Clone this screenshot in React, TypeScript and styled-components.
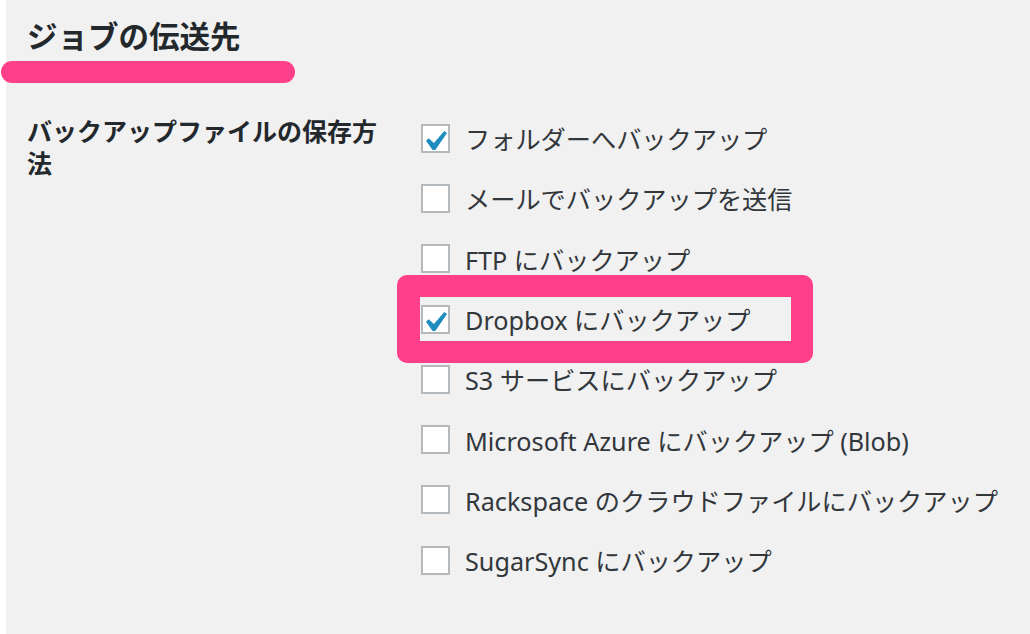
import React from "react";
import styled, { createGlobalStyle } from "styled-components";

const Global = createGlobalStyle`
  html, body { margin: 0; padding: 0; background: #ffffff; }
  body { font-family: "Liberation Sans", "Noto Sans CJK JP", sans-serif; }
`;

const Page = styled.div`
  position: relative;
  width: 1030px;
  height: 634px;
  overflow: hidden;
  background: #ffffff;
  padding-left: 6px;
  box-sizing: border-box;
`;

const Panel = styled.div`
  height: 100%;
  background: #f1f1f1;
  padding: 17px 0 0 21px;
  box-sizing: border-box;
`;

const Title = styled.h2`
  margin: 0;
  font-family: "Liberation Sans", "Noto Sans CJK JP", sans-serif;
  font-size: 30.5px;
  font-weight: 700;
  line-height: 40px;
  color: #23282d;
`;

const FormRow = styled.div`
  display: flex;
  margin-top: 51px;
`;

const FieldLabel = styled.div`
  width: 372px;
  flex-shrink: 0;
  padding-top: 8px;
  padding-right: 22px;
  font-size: 25px;
  font-weight: 700;
  line-height: 32px;
  color: #23282d;
`;

const Options = styled.div`
  display: flex;
  flex-direction: column;
`;

const Option = styled.label`
  display: flex;
  align-items: center;
  height: 60.3px;
  gap: 15px;
  font-family: "Noto Sans", "Noto Sans CJK JP", sans-serif;
  font-size: 25.2px;
  color: #32373c;
  white-space: nowrap;
`;

const Box = styled.span`
  width: 29px;
  height: 29px;
  box-sizing: border-box;
  border: 2px solid #b4b9be;
  background: #ffffff;
  display: flex;
  align-items: flex-start;
  justify-content: flex-start;
  padding: 5px 0 0 3px;
  overflow: visible;
  flex-shrink: 0;
`;

const Underline = styled.div`
  position: absolute;
  left: 1px;
  top: 61px;
  width: 294px;
  height: 22px;
  border-radius: 11px;
  background: #ff3f89;
`;

const Highlight = styled.div`
  position: absolute;
  left: 397px;
  top: 275px;
  width: 416px;
  height: 88px;
  box-sizing: border-box;
  border-style: solid;
  border-color: #ff3f89;
  border-width: 22px 22px 22px 23px;
  border-radius: 10px;
`;

const Check = () => (
  <svg
    width="21"
    height="19"
    viewBox="5.78 4.89 10.39 9.32"
    style={{ flexShrink: 0, overflow: "visible" }}
  >
    <path
      d="M14.83 4.89l1.34.94-5.81 8.38H9.02L5.78 9.67l1.34-1.25 2.57 2.4z"
      fill="#1e8cbe"
    />
  </svg>
);

const items: { label: string; checked: boolean }[] = [
  { label: "フォルダーへバックアップ", checked: true },
  { label: "メールでバックアップを送信", checked: false },
  { label: "FTP にバックアップ", checked: false },
  { label: "Dropbox にバックアップ", checked: true },
  { label: "S3 サービスにバックアップ", checked: false },
  { label: "Microsoft Azure にバックアップ (Blob)", checked: false },
  { label: "Rackspace のクラウドファイルにバックアップ", checked: false },
  { label: "SugarSync にバックアップ", checked: false },
];

export default function App() {
  return (
    <>
      <Global />
      <Page>
        <Panel>
          <Title>ジョブの伝送先</Title>
          <FormRow>
            <FieldLabel>バックアップファイルの保存方法</FieldLabel>
            <Options>
              {items.map((it) => (
                <Option key={it.label}>
                  <Box>{it.checked && <Check />}</Box>
                  {it.label}
                </Option>
              ))}
            </Options>
          </FormRow>
        </Panel>
        <Underline />
        <Highlight />
      </Page>
    </>
  );
}
